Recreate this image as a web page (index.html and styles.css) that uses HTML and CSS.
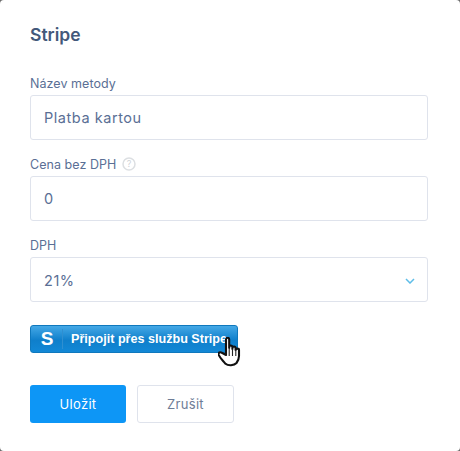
FILE: index.html
```html
<!DOCTYPE html>
<html lang="cs">
<head>
    <meta charset="UTF-8">
    <meta name="viewport" content="width=device-width, initial-scale=1.0">
    <title>Stripe</title>
    <link rel="stylesheet" href="styles.css">
</head>
<body>
    <div class="modal">
        <h2 class="modal-title">Stripe</h2>

        <div class="field">
            <label class="field-label">Název metody</label>
            <div class="input">Platba kartou</div>
        </div>

        <div class="field">
            <label class="field-label">Cena bez DPH
                <svg class="help" width="14" height="14" viewBox="0 0 14 14">
                    <circle cx="7" cy="7" r="6" fill="none" stroke="#dcdfe2" stroke-width="1.5"/>
                    <text x="7" y="10" text-anchor="middle" class="help-mark">?</text>
                </svg>
            </label>
            <div class="input">0</div>
        </div>

        <div class="field">
            <label class="field-label">DPH</label>
            <div class="input select">
                <span>21%</span>
                <svg width="10" height="6" viewBox="0 0 10 6">
                    <path d="M1 1l4 4 4-4" fill="none" stroke="#5dbde8" stroke-width="1.5"/>
                </svg>
            </div>
        </div>

        <div class="stripe-wrap">
            <a class="stripe-button">
                <span class="stripe-logo">S</span>
                <span class="stripe-divider"></span>
                <span class="stripe-text">Připojit přes službu Stripe</span>
            </a>
            <!-- kurzor ruky nad tlacitkem -->
            <svg class="hand" width="25" height="30" viewBox="0 0 25 30">
                <path d="M8 2.500c0-2.300 3.200-2.300 3.200 0V11v-1c0-2 3.200-2 3.200 0v2-1c0-2 3.200-2 3.200 0v2c0-1.800 3.400-1.800 3.400 0v6c0 3.500-1 5-2.500 7-2.500 2.800-8.500 2.800-11 .8-2.300-3-5.500-5.500-6.800-9-.7-2.200 1.600-3.200 3.200-2L8 18z" fill="#fff" stroke="#111" stroke-width="2.100" stroke-linejoin="round"/>
                <path d="M11.200 12v7M14.500 12v7M17.800 13v6" stroke="#222" stroke-width="1.100"/>
            </svg>
        </div>

        <div class="actions">
            <button class="btn btn-primary">Uložit</button>
            <button class="btn btn-secondary">Zrušit</button>
        </div>
    </div>
</body>
</html>
```

FILE: styles.css
```css
html, body {
    margin: 0;
    height: 100%;
}

body {
    background-color: #6b6b6b;
    font-family: "Inter", "Noto Sans", sans-serif;
}

.modal {
    box-sizing: border-box;
    height: 451px;
    background-color: #fff;
    border-radius: 4px;
    padding: 25px 32px 0 30px;
}

.modal-title {
    margin: 0 0 31px;
    font-size: 17.5px;
    line-height: 19px;
    font-weight: 600;
    color: #43587a;
}

.field {
    margin-bottom: 16px;
}

.field-label {
    display: flex;
    align-items: center;
    gap: 6px;
    height: 16px;
    margin-bottom: 4px;
    font-size: 12.5px;
    letter-spacing: 0.05px;
    color: #5a6f95;
}

.help-mark {
    font-size: 9px;
    fill: #d0d3d8;
}

.input {
    box-sizing: border-box;
    height: 45px;
    display: flex;
    align-items: center;
    padding: 0 13px;
    border: 1px solid #dfe3ec;
    border-radius: 3px;
    font-size: 14.5px;
    letter-spacing: 0.55px;
    color: #5a6f95;
}

.select {
    justify-content: space-between;
    padding-top: 2px;
    padding-right: 12px;
}

.stripe-wrap {
    position: relative;
    width: 208px;
    margin-top: 23px;
}

.stripe-button {
    box-sizing: border-box;
    height: 28px;
    display: flex;
    align-items: center;
    border: 1px solid #0f78bd;
    border-radius: 3px;
    background: linear-gradient(#44a8e6, #0f7fcb 55%, #1288d6);
    color: #fff;
    font-family: "Liberation Sans", sans-serif;
    font-size: 12.6px;
    font-weight: 700;
}

.stripe-logo {
    width: 30px;
    padding-left: 1px;
    text-align: center;
    font-size: 19px;
    font-weight: 700;
}

.stripe-divider {
    width: 1px;
    height: 20px;
    background-color: #2f8fd0;
}

.stripe-text {
    margin-left: 8px;
    white-space: nowrap;
}

.hand {
    position: absolute;
    left: 188px;
    top: 12px;
}

.actions {
    display: flex;
    gap: 11px;
    margin-top: 32px;
}

.btn {
    box-sizing: border-box;
    width: 96px;
    height: 38px;
    border-radius: 3px;
    font-family: inherit;
    font-size: 13px;
    letter-spacing: 0.3px;
}

.btn-primary {
    border: none;
    background-color: #0d96f6;
    color: #fff;
}

.btn-secondary {
    width: 97px;
    border: 1px solid #dfe3ec;
    background-color: #fff;
    color: #6e7c96;
}
```
